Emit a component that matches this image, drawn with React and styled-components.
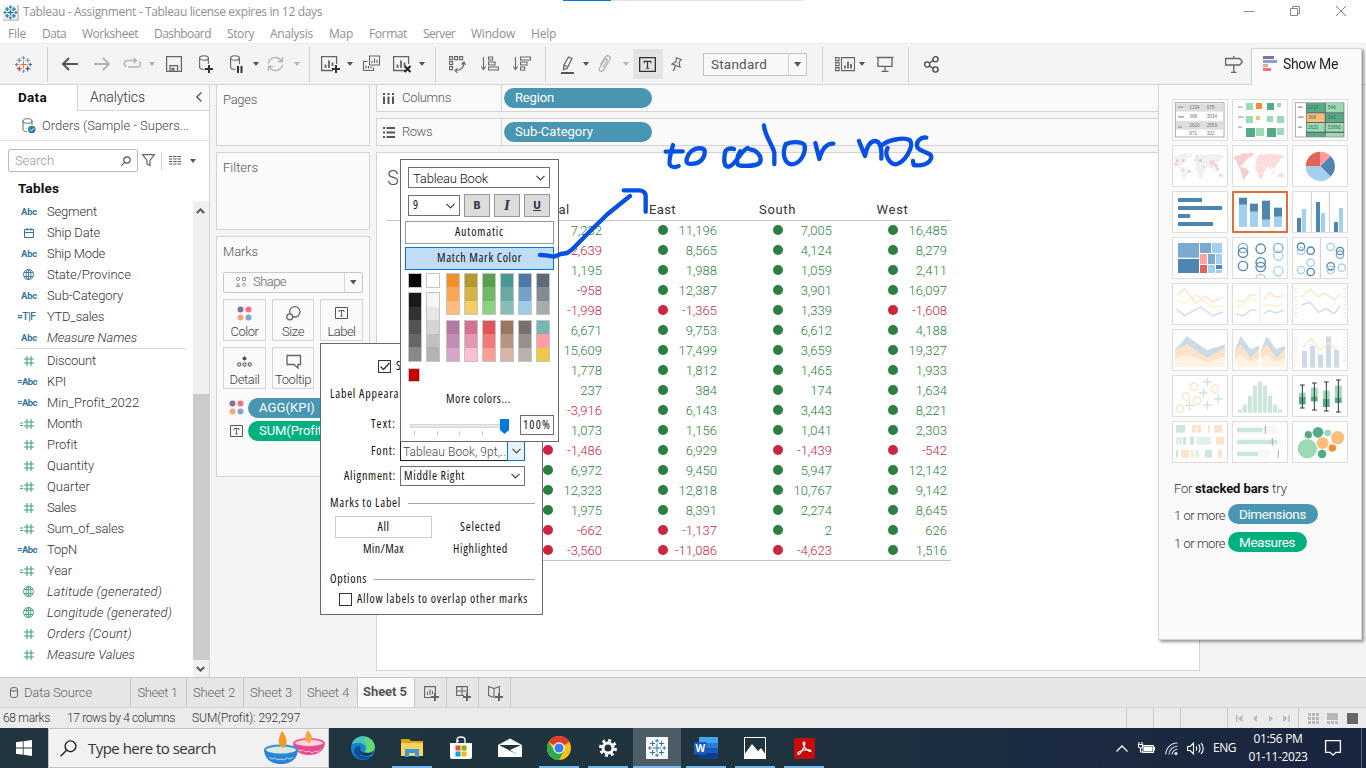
import React, { useLayoutEffect, useRef } from "react";
import styled, { createGlobalStyle, css } from "styled-components";

const BOOK = `Roboto, "Liberation Sans", sans-serif`;
const SYSTEM = `"Open Sans", "Noto Sans", sans-serif`;
const LINE = "#d4d4d4";
const BLUE = "#4996b2";
const GREEN = "#00b180";

const Global = createGlobalStyle`
  *, *::before, *::after { box-sizing: border-box; }
  html, body { margin: 0; padding: 0; overflow: hidden; }
  body { font-family: ${BOOK}; font-size: 13px; color: #333; background: #fff; }
  svg { display: block; flex: none; overflow: visible; }
`;

/* ---------- text ---------- */
const Text = styled.span`
  display: inline-block;
  flex: none;
  white-space: nowrap;
  font-family: ${(p) => (p.$system ? SYSTEM : BOOK)};
  font-size: ${(p) => p.$size || 13}px;
  font-weight: ${(p) => p.$weight || (p.$system ? 400 : 350)};
  font-stretch: ${(p) => (p.$narrow ? "82%" : "100%")};
  font-style: ${(p) => (p.$italic ? "italic" : "normal")};
  color: ${(p) => p.$color || "inherit"};
  line-height: 1.2;
  padding-top: ${(p) => p.$drop || 0}px;
`;

/* Tracks its letters so the string spans exactly `w` pixels. */
function T({ w, children, ...rest }) {
  const ref = useRef(null);
  useLayoutEffect(() => {
    const el = ref.current;
    if (!w || !el) return;
    el.style.letterSpacing = "0px";
    const natural = el.getBoundingClientRect().width;
    el.style.letterSpacing = `${(w - natural) / el.textContent.length}px`;
  }, [w, children]);
  return <Text ref={ref} {...rest}>{children}</Text>;
}
const D = (p) => <T $system $narrow $weight={500} $size={12} {...p} />;

/* ---------- frame ---------- */
const Window = styled.div`
  position: relative;
  width: 1366px;
  height: 768px;
  display: flex;
  flex-direction: column;
  background: #f4f4f4;
  overflow: hidden;
`;
const TitleBar = styled.div`
  height: 24px;
  flex: none;
  display: flex;
  align-items: center;
  background: #fff;
  padding: 0 20px 0 3px;
`;
const TitleText = styled.div`margin-left: 5px; flex: 1; color: #8f8f8f; display: flex;`;
const WindowButtons = styled.div`display: flex; gap: 36px; margin-top: -3px;`;
const LoadingBar = styled.div`
  position: absolute;
  top: 0;
  left: 563px;
  width: 241px;
  height: 1px;
  background: linear-gradient(to right, #0078d7 48px, #e3e3e3 48px);
`;
const MenuBar = styled.div`
  height: 19px;
  flex: none;
  display: flex;
  align-items: center;
  gap: 16px;
  padding: 1px 0 0 8px;
  background: #fff;
  color: #8f8f8f;
`;
const ToolBar = styled.div`
  height: 41px;
  flex: none;
  display: flex;
  align-items: center;
  border-top: 1px solid #eee;
  background: #f4f4f4;
`;
const Tool = styled.div`
  width: ${(p) => p.$w}px;
  margin-left: ${(p) => p.$ml}px;
  flex: none;
  display: flex;
  justify-content: center;
`;
const ToolRule = styled.div`
  width: 1px;
  height: ${(p) => p.$h || 35}px;
  margin-left: ${(p) => p.$ml}px;
  background: #d0d0d0;
  flex: none;
`;
const PressedTool = styled.div`
  width: 30px;
  height: 30px;
  margin-left: 4px;
  background: #e3e3e3;
  display: flex;
  align-items: center;
  justify-content: center;
  padding-right: 1px;
`;
const FitSelect = styled.div`
  width: 104px;
  height: 23px;
  margin-left: 19px;
  display: flex;
  align-items: center;
  padding-left: 7px;
  border: 1px solid #c4c4c4;
  color: #555;
  background: #f8f8f8;
`;
const SelectArrow = styled.div`
  margin-left: auto;
  width: 18px;
  height: 100%;
  display: flex;
  align-items: center;
  justify-content: center;
  border-left: 1px solid #d6d6d6;
`;

const Caret = ({ c = "#555", s = 1 }) => (
  <svg width={6 * s} height={4 * s} viewBox="0 0 6 4"><path d="M0 0h6L3 4z" fill={c} /></svg>
);
const CaretTool = ({ ml, c }) => <Tool $w={6} $ml={ml}><Caret c={c} /></Tool>;

const crosses = [
  [9, 9, 4], [4.5, 4.5, 2.6], [13.5, 4.5, 2.6], [4.5, 13.5, 2.6], [13.5, 13.5, 2.6],
  [9, 1.8, 1.8], [9, 16.2, 1.8], [1.8, 9, 1.8], [16.2, 9, 1.8],
];
const TableauMark = ({ size = 18, colors = ["#2e7ba6"], sw = 1.1 }) => (
  <svg width={size} height={size} viewBox="0 0 18 18" strokeWidth={sw}>
    {crosses.map(([x, y, r], i) => (
      <path key={i} d={`M${x - r} ${y}h${2 * r}M${x} ${y - r}v${2 * r}`} stroke={colors[i % colors.length]} />
    ))}
  </svg>
);

/* ---------- toolbar drawings ---------- */
const S = (p) => <svg width={p.w} height={p.h || 18} viewBox={`0 0 ${p.w} ${p.h || 18}`} fill="none" stroke={p.c || "#666"} strokeWidth={p.sw || 1.3}>{p.children}</svg>;
const Plus = ({ x, y }) => <path d={`M${x - 4} ${y}h8M${x} ${y - 4}v8`} stroke="#333" strokeWidth="2" />;
const Cyl = () => <><ellipse cx="5" cy="3" rx="4.4" ry="2.3" strokeWidth="1.1" /><path d="M.6 3v9c0 1.6 2 2.5 5 2.5M9.4 3v6" strokeWidth="1.1" /></>;
const ArrowIcon = ({ flip, c }) => (
  <S w={16} h={14} c={c} sw={2}><path d={flip ? "M0 7h15M9 1l6 6-6 6" : "M16 7H1M7 1L1 7l6 6"} /></S>
);
const ChartBox = ({ children }) => (
  <S w={19}><path d="M12 15.5H.6V1.6h15V9" /><path d="M4.5 13V9.5M8 13V5.5M11.5 11V7.5" strokeWidth="1.8" />{children}</S>
);

function Toolbar() {
  return (
    <ToolBar>
      <Tool $w={18} $ml={14}><TableauMark size={17} colors={["#e8762c", "#5b8db8", "#7f99b2", "#c72035", "#1f457e", "#7099a6", "#8894b8", "#59879b", "#5c6692"]} /></Tool>
      <ToolRule $ml={15} />
      <Tool $w={16} $ml={14}><ArrowIcon c="#555" /></Tool>
      <Tool $w={16} $ml={16}><ArrowIcon flip c="#b5b5b5" /></Tool>
      <Tool $w={18} $ml={13}><S w={18} h={12} c="#b5b5b5" sw={1.5}><path d="M3 8.500A3.200 3.200 0 0 1 4 2.500h9.500M10.500 0l3 2.500-3 2.700M16.500 3.500c2 2.500 1 5.500-2 5.500H5" /></S></Tool>
      <CaretTool ml={8} c="#b5b5b5" />
      <Tool $w={16} $ml={11}><S w={16} h={16}><path d="M.6.6h14.800v14.800H.6zM4 15V9.600h7.500V15M6 15v-2.500h2V15" /></S></Tool>
      <Tool $w={14} $ml={17}><S w={14}><Cyl /><Plus x={10} y={14} /></S></Tool>
      <Tool $w={13} $ml={17}><S w={13}><Cyl /><path d="M8 11v7M11.5 11v7" stroke="#333" strokeWidth="2" /></S></Tool>
      <CaretTool ml={10} />
      <Tool $w={17} $ml={8}><S w={17} h={16} c="#b5b5b5" sw={1.5}><path d="M1.500 7.500A7 7 0 0 1 14.500 5M15.500 8.500A7 7 0 0 1 2.500 11M15.500 1v4.500H11M1.500 15v-4.500H6" /></S></Tool>
      <CaretTool ml={10} c="#b5b5b5" />
      <ToolRule $ml={9} />
      <Tool $w={19} $ml={11}><ChartBox><Plus x={15} y={14} /></ChartBox></Tool>
      <CaretTool ml={7} />
      <Tool $w={17} $ml={10}>
        <S w={17} sw={1.1}><path d="M6.500 1h10v9h-10zM9 8V6M11.500 8V3.500M14 8V5M4.500 6.500h-4v9h10v-3M3 13.500v-3M5.500 13.500V11M8 13.500v-2" /></S>
      </Tool>
      <Tool $w={19} $ml={13}><ChartBox><path d="M11.500 11l6 6M17.500 11l-6 6" stroke="#222" strokeWidth="2" /></ChartBox></Tool>
      <CaretTool ml={7} />
      <ToolRule $ml={10} />
      <Tool $w={17} $ml={13}><S w={17} sw={1.1}><path d="M.6 1.600h3v3h-3zM5.600 1.600h3v3h-3zM10.600 1.600h3v3h-3zM.6 6.600h3v3h-3zM.6 11.600h3v3h-3zM15 7c0 5-3 8.500-9 8.800M12.500 9.500L15 7l1.500 3M8.500 13L6 15.800l2.500 2" /></S></Tool>
      <Tool $w={18} $ml={15}><S w={18} sw={1.1}><path d="M2.500 2v12M.3 11.500l2.200 3 2.200-3M7.600 2h4v3h-4zM7.600 7h6.400v3H7.600zM7.600 12h9.800v3H7.600z" /></S></Tool>
      <Tool $w={18} $ml={14}><S w={18} sw={1.1}><path d="M2.500 2v12M.3 11.500l2.200 3 2.200-3M7.600 2h9.800v3H7.600zM7.600 7h6.400v3H7.600zM7.600 12h4v3h-4z" /></S></Tool>
      <ToolRule $ml={14} />
      <Tool $w={15} $ml={14}><S w={15} h={19}><path d="M8.500 2l3.500 1.500-5 10-3.500 1 .5-4.500zM4 10l3 1.500" /><path d="M1 18h13" stroke="#555" strokeWidth="2" /></S></Tool>
      <CaretTool ml={8} />
      <Tool $w={14} $ml={9}><S w={14} c="#b5b5b5"><path d="M2.500 9.500l5-7.500c2-2.500 6-.5 4.500 2.500l-6.500 10.500c-2 2.500-5.200.8-4-2L7 4.500c1-1.300 3 0 2.200 1.300L4.800 12.500" /></S></Tool>
      <CaretTool ml={11} c="#b5b5b5" />
      <PressedTool><TextGlyph w={17} h={15} c="#333" /></PressedTool>
      <Tool $w={14} $ml={7}><S w={14} h={16} sw={1.200}><path d="M5.500 1.500l6.500 2.200M6.800 2l-.9 3.500L2 8l8 3-.9-4.500 1.800-3.200M5.500 9.600L3.200 15" /></S></Tool>
      <FitSelect><T w={56} $size={13.500} $weight={400}>Standard</T><SelectArrow><Caret s={1.200} /></SelectArrow></FitSelect>
      <ToolRule $ml={15} />
      <Tool $w={20} $ml={12}><S w={20} h={16} sw={1.1}><path d="M.6 1.600h3.500v3H.6zM.6 6.600h3.500v3H.6zM.6 11.600h3.500v3H.6zM6.500 1.600h13v13h-13z" /><path d="M10 12.500v-3M13 12.500v-7M16 12.500V8" strokeWidth="1.800" /></S></Tool>
      <CaretTool ml={4} />
      <Tool $w={18} $ml={11}><S w={18} h={16}><path d="M.5 1.500h17M2 1.500v8.800h14V1.500M9 10v5M5.500 15.300h7" /></S></Tool>
      <ToolRule $ml={14} />
      <Tool $w={16} $ml={15}><S w={16} h={17} c="#444"><circle cx="3.200" cy="8.500" r="2.600" /><circle cx="11.500" cy="3.200" r="2.600" /><circle cx="11.500" cy="13.500" r="2.600" /><path d="M5.400 7l3.800-2.500M5.400 10l3.800 2.300" /></S></Tool>
      <Tool $w={18} $ml={285}><S w={18}><path d="M.6 3.500h14l2.800 3.200-2.800 3.300h-14zM8.800 1v2.500M8.800 10v7M6 17.300h5.500" /></S></Tool>
    </ToolBar>
  );
}
function TextGlyph({ w = 13, h = 12, c = "#555" }) {
  return (
    <svg width={w} height={h} viewBox="0 0 13 12" preserveAspectRatio="none" fill="none" stroke={c}>
      <path d="M.5.5h12v11H.5z" /><path d="M4 5V3.500h5V5M6.500 3.500v5.500M5.200 9h2.600" strokeWidth=".9" />
    </svg>
  );
}

/* ---------- sidebar ---------- */
const Work = styled.div`flex: none; height: 593px; display: flex; border-top: 1px solid ${LINE};`;
const Sidebar = styled.div`
  width: 210px;
  flex: none;
  display: flex;
  flex-direction: column;
  background: #fff;
  border-right: 1px solid ${LINE};
`;
const SideTabs = styled.div`height: 26px; display: flex; flex: none;`;
const DataTab = styled.div`width: 77px; display: flex; padding: 4px 0 0 18px; color: #111;`;
const AnalyticsTab = styled.div`
  flex: 1;
  display: flex;
  justify-content: space-between;
  padding: 4px 7px 0 12px;
  background: #fafafa;
  border-left: 1px solid ${LINE};
  border-bottom: 1px solid ${LINE};
  svg { margin-top: 3px; }
`;
const SourceRow = styled.div`
  height: 30px;
  flex: none;
  display: flex;
  align-items: center;
  gap: 6px;
  padding-left: 22px;
  border-bottom: 1px solid #e2e2e2;
  color: #444;
`;
const SearchRow = styled.div`height: 39px; flex: none; display: flex; align-items: center; padding-left: 8px;`;
const SearchBox = styled.div`
  width: 130px;
  height: 23px;
  display: flex;
  align-items: center;
  justify-content: space-between;
  padding: 0 6px;
  border: 1px solid #bbb;
  border-radius: 2px;
  color: #999;
`;
const SearchTools = styled.div`display: flex; align-items: center; margin-left: 4px; gap: 7px;`;
const TablesTitle = styled.div`height: 22px; flex: none; padding: 0 0 0 18px; color: #111; display: flex; align-items: center; margin-top: -3px;`;
const FieldsArea = styled.div`flex: 1; display: flex; min-height: 0; margin-top: 2px;`;
const FieldList = styled.div`flex: 1;`;
const FieldRow = styled.div`height: 21px; display: flex; align-items: center; color: #333;`;
const FieldIcon = styled.div`
  width: 38px;
  margin-right: 9px;
  padding-right: ${(p) => p.$pad}px;
  display: flex;
  justify-content: flex-end;
  align-items: center;
  gap: 1px;
`;
const FieldRule = styled.div`height: 1px; margin: 0 7px 1px 15px; background: #d8d8d8;`;
const ScrollTrack = styled.div`
  width: 16px;
  display: flex;
  flex-direction: column;
  justify-content: space-between;
  background: linear-gradient(to bottom, #f0f0f0 193px, #cbcbcb 193px, #cbcbcb 459px, #f0f0f0 459px);
  padding: 7px 3px 5px 3px;
`;

const Globe = ({ c }) => (
  <svg width="11" height="11" viewBox="0 0 11 11" fill="none" stroke={c} strokeWidth=".9"><circle cx="5.500" cy="5.500" r="5" /><ellipse cx="5.500" cy="5.500" rx="2.400" ry="5" /><path d="M1 3.500h9M1 7.500h9M5.500.5v10" /></svg>
);
const Hash = ({ eq }) => (
  <svg width={eq ? 14 : 10} height="10" viewBox={eq ? "-4 0 14 10" : "0 0 10 10"} fill="none" stroke="#3fa37c" strokeWidth="1.100">
    <path d="M0 3h10M0 7h10M3 0v10M7 0v10" />{eq && <path d="M-4 4h3M-4 6.500h3" />}
  </svg>
);
const NAVY = "#33779b";
function Icon({ kind }) {
  if (kind === "abc") return <FieldIcon $pad={1}><T w={16} $drop={1} $size={9.500} $weight={700} $color={NAVY}>Abc</T></FieldIcon>;
  if (kind === "=abc") return <FieldIcon $pad={1}><T w={20} $drop={1} $size={9.500} $weight={700} $color={NAVY}>=Abc</T></FieldIcon>;
  if (kind === "=tf") return <FieldIcon $pad={3}><T w={18} $drop={1} $size={10.500} $weight={500} $color={NAVY}>=T|F</T></FieldIcon>;
  if (kind === "date") return <FieldIcon $pad={4}><svg width="10" height="10" viewBox="0 0 10 10" fill="none" stroke={NAVY}><path d="M.5 1.500h9v8h-9zM.5 4.500h9M3 0v2.500M7 0v2.500" /></svg></FieldIcon>;
  if (kind === "geo") return <FieldIcon $pad={4}><Globe c={NAVY} /></FieldIcon>;
  if (kind === "ggeo") return <FieldIcon $pad={4}><Globe c="#3fa37c" /></FieldIcon>;
  return <FieldIcon $pad={4}><Hash eq={kind === "=#"} /></FieldIcon>;
}
const dims = [
  ["abc", "Segment", 50], ["date", "Ship Date", 53], ["abc", "Ship Mode", 58], ["geo", "State/Province", 84],
  ["abc", "Sub-Category", 76], ["=tf", "YTD_sales", 57], ["abc", "Measure Names", 90, 1],
];
const measures = [
  ["#", "Discount", 49], ["=abc", "KPI", 19], ["=abc", "Min_Profit_2022", 92], ["=#", "Month", 35], ["#", "Profit", 30],
  ["#", "Quantity", 47], ["=#", "Quarter", 43], ["#", "Sales", 29], ["=#", "Sum_of_sales", 77], ["=abc", "TopN", 30],
  ["=#", "Year", 25], ["ggeo", "Latitude (generated)", 115], ["ggeo", "Longitude (generated)", 125],
  ["#", "Orders (Count)", 85], ["#", "Measure Values", 88],
];
const Field = ({ f }) => <FieldRow><Icon kind={f[0]} /><T w={f[2]} $italic={f[3] || /generated|Count|Values/.test(f[1])}>{f[1]}</T></FieldRow>;

function SidePanel() {
  return (
    <Sidebar>
      <SideTabs>
        <DataTab><T w={29} $weight={700} $size={13.500}>Data</T></DataTab>
        <AnalyticsTab>
          <T w={55} $size={14}>Analytics</T>
          <svg width="6" height="10" viewBox="0 0 6 10" fill="none" stroke="#555" strokeWidth="1.300"><path d="M5.500.5L.8 5l4.700 4.500" /></svg>
        </AnalyticsTab>
      </SideTabs>
      <SourceRow>
        <svg width="14" height="16" viewBox="0 0 14 16" fill="none" stroke="#666"><ellipse cx="5.500" cy="3" rx="4.500" ry="2.300" /><path d="M1 3v8.500c0 1.300 2 2 4 2M10 3v4" /><circle cx="9.800" cy="11.500" r="3.800" fill="#2f7ea3" stroke="none" /><path d="M8 11.500l1.400 1.400L12 10.200" stroke="#fff" /></svg>
        <T w={147}>Orders (Sample - Supers...</T>
      </SourceRow>
      <SearchRow>
        <SearchBox><T w={39}>Search</T><svg width="10" height="10" viewBox="0 0 10 10" fill="none" stroke="#555" strokeWidth="1.200"><circle cx="6" cy="4" r="3.200" /><path d="M3.700 6.300L.3 9.700" /></svg></SearchBox>
        <SearchTools>
          <S w={13} h={13} sw={1.200}><path d="M.6.6h11.800L8 6.500v5L5 10V6.500z" /></S>
          <ToolRule $ml={-1} $h={18} />
          <svg width="12" height="10" viewBox="0 0 12 10" stroke="#555" strokeWidth="1.200"><path d="M0 .5h12M0 3h12M0 5.500h12M0 8h12" strokeDasharray="3.300 1" /></svg>
          <Tool $w={7} $ml={1}><Caret /></Tool>
        </SearchTools>
      </SearchRow>
      <TablesTitle><T w={41} $weight={700} $size={13.500}>Tables</T></TablesTitle>
      <FieldsArea>
        <FieldList>
          {dims.map((f) => <Field key={f[1]} f={f} />)}
          <FieldRule />
          {measures.map((f) => <Field key={f[1]} f={f} />)}
        </FieldList>
        <ScrollTrack>
          <S w={9} h={6} c="#555" sw={2}><path d="M.8 5l3.700-3.700L8.200 5" /></S>
          <S w={9} h={6} c="#555" sw={2}><path d="M.8 1l3.700 3.700L8.200 1" /></S>
        </ScrollTrack>
      </FieldsArea>
    </Sidebar>
  );
}

/* ---------- cards ---------- */
const Cards = styled.div`width: 154px; margin-left: 6px; flex: none; display: flex; flex-direction: column; gap: 6px;`;
const Card = styled.div`
  height: ${(p) => p.$h}px;
  margin-top: ${(p) => p.$mt || 0}px;
  border: 1px solid ${LINE};
  background: #fafafa;
  padding: 7px 6px;
  color: #555;
`;
const MarkSelect = styled.div`
  height: 21px;
  width: 140px;
  margin-top: 12px;
  display: flex;
  align-items: center;
  gap: 7px;
  padding-left: 12px;
  border: 1px solid #c8c8c8;
  border-radius: 2px;
  color: #666;
`;
const MarkGrid = styled.div`display: grid; grid-template-columns: 43px 42px 43px; grid-auto-rows: 42px; gap: 6px; margin-top: 6px;`;
const MarkButton = styled.div`
  border: 1px solid ${LINE};
  display: flex;
  flex-direction: column;
  align-items: center;
  justify-content: space-between;
  padding: ${(p) => p.$pt || 6}px 0 0;
  color: #444;
`;
const PillRow = styled.div`display: flex; align-items: center; gap: ${(p) => p.$gap}px; margin-top: ${(p) => p.$mt}px; padding-left: ${(p) => p.$pl}px;`;
const Pill = styled.div`
  width: ${(p) => p.$w}px;
  height: 20px;
  border-radius: 10px;
  background: ${(p) => p.$c};
  color: #fff;
  display: flex;
  align-items: center;
  padding-left: 11px;
`;
const FourDots = ({ s = 15 }) => (
  <svg width={s} height={s} viewBox="0 0 15 15"><circle cx="3.500" cy="3.500" r="3" fill="#876f98" /><circle cx="11.500" cy="3.500" r="3" fill="#fb6e80" /><circle cx="3.500" cy="11.500" r="3" fill="#f4a67c" /><circle cx="11.500" cy="11.500" r="3" fill="#82a3cd" /></svg>
);

function MarkCards() {
  return (
    <Cards>
      <Card $h={62} $mt={-1}><T w={34}>Pages</T></Card>
      <Card $h={78}><T w={35}>Filters</T></Card>
      <Card $h={241}>
        <T w={35}>Marks</T>
        <MarkSelect>
          <svg width="10" height="10" viewBox="0 0 10 10" fill="none" stroke="#888" strokeWidth=".9"><circle cx="2" cy="2" r="1.600" /><path d="M6.500.5h3v3h-3zM.4 9.500h3.400L2 6.300zM8 6l1.700 1.800L8 9.600 6.300 7.800z" /></svg>
          <T w={33}>Shape</T><SelectArrow><Caret s={1.100} /></SelectArrow>
        </MarkSelect>
        <MarkGrid>
          <MarkButton><FourDots /><T w={28}>Color</T></MarkButton>
          <MarkButton><S w={15} h={15}><circle cx="8.800" cy="5.800" r="5.200" /><circle cx="3.800" cy="10.800" r="3" fill="#fafafa" /></S><T w={22}>Size</T></MarkButton>
          <MarkButton $pt={7}><TextGlyph /><T w={28}>Label</T></MarkButton>
          <MarkButton $pt={7}><S w={15} h={14} sw={1.100}><circle cx="7.500" cy="3.500" r="2" fill="#555" stroke="none" /><circle cx="2.200" cy="9.500" r="1.600" /><circle cx="7.500" cy="9.500" r="1.600" /><circle cx="12.800" cy="9.500" r="1.600" /></S><T w={30}>Detail</T></MarkButton>
          <MarkButton><S w={15} h={15}><path d="M1 1.500h13.500v9H12V14L8 10.500H1z" /></S><T w={36}>Tooltip</T></MarkButton>
        </MarkGrid>
        <PillRow $gap={4} $mt={9} $pl={6}><FourDots /><Pill $c={BLUE} $w={106}><T w={56} $weight={400}>AGG(KPI)</T></Pill></PillRow>
        <PillRow $gap={5} $mt={3} $pl={7}><TextGlyph /><Pill $c={GREEN} $w={106}><T w={67} $weight={400}>SUM(Profit)</T></Pill></PillRow>
      </Card>
    </Cards>
  );
}

/* ---------- worksheet ---------- */
const Sheet = styled.div`width: 824px; margin-left: 6px; flex: none; display: flex; flex-direction: column; gap: 6px;`;
const Shelf = styled.div`
  height: 28px;
  margin-top: ${(p) => p.$mt || 0}px;
  display: flex;
  align-items: center;
  border: 1px solid ${LINE};
  background: #fafafa;
  color: #555;
`;
const ShelfName = styled.div`width: 125px; height: 100%; display: flex; align-items: center; gap: ${(p) => p.$gap}px; padding-left: 6px; border-right: 1px solid ${LINE}; margin-right: 2px;`;
const Canvas = styled.div`height: 519px; border: 1px solid ${LINE}; background: #fff; padding: 13px 0 0 9px;`;
const SheetTitle = styled.div`height: 34px; padding-left: 1px; color: #555;`;
const Table = styled.div`width: 565px; border-bottom: 1px solid #c4c4c4;`;
const TableHead = styled.div`
  height: 21px;
  margin-bottom: -1px;
  display: grid;
  grid-template-columns: 104px repeat(4, 115px);
  justify-items: center;
  align-items: center;
  border-bottom: 1px solid #c4c4c4;
  color: #333;
`;
const TableRow = styled.div`height: 20px; display: grid; grid-template-columns: 104px repeat(4, 115px);`;
const NumberCell = styled.div`
  display: flex;
  align-items: center;
  justify-content: space-between;
  padding: 0 3px 0 53px;
  color: ${(p) => (p.$neg ? "#cc2540" : "#2a7f41")};
`;
const Dot = styled.i`width: 10px; height: 10px; border-radius: 50%; background: ${(p) => (p.$neg ? "#cc2540" : "#2a7f41")};`;

const regions = [["Central", 44], ["East", 27], ["South", 37], ["West", 32]];
const profits = [
  "7,232 11,196 7,005 16,485", "-2,639 8,565 4,124 8,279", "1,195 1,988 1,059 2,411", "-958 12,387 3,901 16,097",
  "-1,998 -1,365 1,339 -1,608", "6,671 9,753 6,612 4,188", "15,609 17,499 3,659 19,327", "1,778 1,812 1,465 1,933",
  "237 384 174 1,634", "-3,916 6,143 3,443 8,221", "1,073 1,156 1,041 2,303", "-1,486 6,929 -1,439 -542",
  "6,972 9,450 5,947 12,142", "12,323 12,818 10,767 9,142", "1,975 8,391 2,274 8,645", "-662 -1,137 2 626", "-3,560 -11,086 -4,623 1,516",
].map((r) => r.split(" "));

function Worksheet() {
  return (
    <Sheet>
      <Shelf $mt={-1}>
        <ShelfName $gap={8}><svg width="11" height="11" viewBox="0 0 11 11" stroke="#555" strokeWidth="2"><path d="M1 0v2M1 3.500V11M5.500 0v2M5.500 3.500V11M10 0v2M10 3.500V11" /></svg><T w={49}>Columns</T></ShelfName>
        <Pill $c={BLUE} $w={148}><T w={39} $weight={400}>Region</T></Pill>
      </Shelf>
      <Shelf>
        <ShelfName $gap={7}><svg width="12" height="11" viewBox="0 0 12 11" stroke="#555" strokeWidth="2"><path d="M0 1h2M3.500 1H12M0 5.500h2M3.500 5.500H12M0 10h2M3.500 10H12" /></svg><T w={30}>Rows</T></ShelfName>
        <Pill $c={BLUE} $w={148}><T w={78} $weight={400}>Sub-Category</T></Pill>
      </Shelf>
      <Canvas>
        <SheetTitle><T w={69} $size={20} $weight={300}>Sheet 5</T></SheetTitle>
        <Table>
          <TableHead><T w={76} $weight={400}>Sub-Category</T>{regions.map(([n, w]) => <T key={n} w={w} $weight={400}>{n}</T>)}</TableHead>
          {profits.map((row, i) => (
            <TableRow key={i}>
              <span />
              {row.map((v, j) => <NumberCell key={j} $neg={v[0] === "-"}><Dot $neg={v[0] === "-"} /><Text $drop={2}>{v}</Text></NumberCell>)}
            </TableRow>
          ))}
        </Table>
      </Canvas>
    </Sheet>
  );
}

/* ---------- show me ---------- */
const ShowMe = styled.div`
  position: absolute;
  left: 1158px;
  top: 48px;
  width: 204px;
  display: flex;
  flex-direction: column;
  filter: drop-shadow(2px 2px 1.500px rgba(0, 0, 0, 0.4));
`;
const ShowMeTab = styled.div`
  width: 111px;
  height: 37px;
  margin: 0 0 -1px 93px;
  z-index: 1;
  display: flex;
  gap: 6px;
  padding: 7px 0 0 11px;
  background: #fafafa;
  border: 1px solid ${LINE};
  border-bottom: 0;
  color: #222;
`;
const ShowMeBody = styled.div`height: 556px; background: #fafafa; border: 1px solid ${LINE}; padding: 14px 0 0 13px;`;
const Thumbs = styled.div`display: grid; grid-template-columns: repeat(3, 56px); grid-auto-rows: 42px; gap: 4px;`;
const Thumb = styled.div`
  border: ${(p) => (p.$on ? "2px solid #e0703a" : "1px solid #ddd")};
  background: #fff;
  overflow: hidden;
  svg { margin: ${(p) => (p.$on ? -2 : -1)}px; }
`;
const Advice = styled.div`
  height: 28px;
  padding-left: 2px;
  display: flex;
  align-items: center;
  color: #333;
  gap: 3px;
`;
const AdviceTitle = styled(Advice)`height: 22px; margin-top: 15px; gap: 0;`;

const R = ({ d, f }) => d.map(([x, y, w, h], i) => <rect key={i} x={x} y={y} width={w} height={h} fill={Array.isArray(f) ? f[i % f.length] : f} />);
const C = ({ d, f, s }) => d.map(([x, y, r], i) => <circle key={i} cx={x} cy={y} r={r} fill={s ? "none" : Array.isArray(f) ? f[i % f.length] : f} stroke={s ? (Array.isArray(s) ? s[i % s.length] : s) : "none"} strokeWidth="4" />);
const Num = ({ x, y, children, c = "#777" }) => <text x={x} y={y} fontSize="14" fontFamily="Liberation Sans" fill={c}>{children}</text>;
const dk = "#4f86b0", lt = "#a4d0ef", md = "#7ca9cf";
const gd = "#55ab87", gl = "#9cdab4", or = "#ffbd7b", od = "#f58f2c";
const po = "#fde3c8", pb = "#cddbe9", py = "#fff0c9", pg = "#cbe7da";
const P = ({ d, s }) => <path d={d} fill="none" stroke={s} strokeWidth="4" />;
const WorldMap = ({ a, b }) => (
  <g>
    <path d="M5 38l6-6 14-2 4-4 14-2 6 4 2-4 14 0-4 9-9 6-4-2-4 8-7 6-4 8-7 3 2 7 5 3-3 2-8-5-5-10-3-8-3-7-4 0zM29 67l10 1 13 11-5 10-7 6-3 11-5-3-3-16-5-10z" fill={a} />
    <path d="M73 43l5-10 10-6 5 4 12-5 22 2 26 2 4 4-5 6-6-1-3 10-8 4-2 9-6 4-2 8-6-7-1 8-6-7-4-2-8 6-6-14-10-2-12 1zM70 56l10-3 12 4 6 13 5-1-4 9-4 4-1 10-7 10-6-2-3-15-8-9zM122 76l8 8-4 2-6-6zM138 88l9-5 7 3 2 9-6 3-12-3z" fill={b} />
  </g>
);
const thumbs = [
  <><rect x="10" y="11" width="146" height="103" fill="#fff" stroke="#aaa" strokeWidth="3" /><R f="#dedede" d={[[12, 13, 142, 25], [12, 66, 142, 26]]} /><R f="#aaa" d={[[18, 22, 15, 5], [18, 51, 18, 5], [18, 82, 12, 5]]} />
    {[["1234", "678", 30], ["368", "3034", 58], ["2620", "2559", 85], ["971", "322", 109]].map(([a, b, y]) => <g key={y}><Num x={52} y={y}>{a}</Num><Num x={104} y={y}>{b}</Num></g>)}</>,
  <><R f="#bbb" d={[[18, 22, 14, 5], [18, 52, 17, 5], [18, 82, 12, 5]]} /><R f={[gl, od, gd, gl, gl, or, gl, gl, gd, gl, gd, gl]} d={[[42, 12, 21, 21], [72, 12, 18, 18], [105, 12, 21, 21], [135, 12, 12, 12], [42, 51, 21, 21], [72, 51, 12, 12], [105, 51, 18, 18], [135, 51, 21, 21], [42, 87, 27, 27], [72, 87, 24, 24], [105, 87, 27, 27], [135, 87, 21, 21]]} /></>,
  <><rect x="10" y="11" width="146" height="103" fill="#fff" stroke="#aaa" strokeWidth="3" /><R f="#aaa" d={[[18, 22, 14, 5], [18, 52, 17, 5], [18, 82, 12, 5]]} /><R f="#666" d={[[42, 12, 114, 101]]} /><R f={[gd, gl, or, gd, gl, gl, gd, gl]} d={[[44, 12, 54, 28], [101, 12, 54, 28], [44, 43, 54, 26], [101, 43, 54, 26], [44, 72, 54, 26], [101, 72, 54, 26], [44, 102, 54, 11], [101, 102, 54, 11]]} />
    {[["1234", "546", 30], ["368", "340", 61], ["2620", "53890", 91]].map(([a, b, y]) => <g key={y}><Num x={48} y={y} c="#3b6b58">{a}</Num><Num x={108} y={y} c="#3b6b58">{b}</Num></g>)}</>,
  <><WorldMap a="#f1f1f1" b="#f1f1f1" /><C f={["#edc1c6", "#f8d3d3"]} d={[[15, 47, 4], [12, 58, 6], [34, 47, 4], [33, 75, 4], [52, 79, 4], [72, 45, 4], [85, 47, 5], [75, 35, 4], [96, 65, 3], [121, 53, 8], [132, 62, 4], [136, 71, 6], [146, 90, 3]]} /></>,
  <WorldMap a="#f8cfcf" b="#fcdcdc" />,
  <><path d="M85 64V20A44 44 0 0 1 116 33z" fill="#ff9d96" /><path d="M85 64L116 33A44 44 0 0 1 116 95z" fill={dk} /><path d="M85 64L116 95A44 44 0 0 1 41 64z" fill={lt} /><path d="M85 64H41A44 44 0 0 1 85 20z" fill="#e1645c" /></>,
  <R f={dk} d={[[18, 21, 72, 12], [18, 45, 132, 12], [18, 69, 36, 12], [18, 93, 105, 12]]} />,
  <><R f={lt} d={[[21, 41, 24, 67], [54, 62, 24, 46], [90, 86, 24, 22], [126, 77, 24, 31]]} /><R f={dk} d={[[21, 20, 24, 21], [54, 38, 24, 24], [90, 29, 24, 57], [126, 50, 24, 27]]} /></>,
  <><path d="M58 3v120M112 3v120" stroke="#ccc" strokeWidth="3" /><R f={[dk, lt]} d={[[15, 81, 12, 45], [30, 54, 12, 72], [72, 33, 12, 93], [87, 66, 12, 60], [126, 93, 12, 33], [141, 51, 12, 75]]} /></>,
  <R f={[md, dk, md, lt, "#ffa39d", md, lt, "#e1645c", lt, dk, lt]} d={[[18, 18, 63, 44], [18, 66, 63, 42], [84, 18, 33, 30], [120, 18, 30, 30], [84, 51, 21, 30], [108, 51, 21, 30], [132, 51, 18, 30], [84, 84, 21, 24], [108, 84, 21, 24], [132, 84, 18, 12], [132, 99, 18, 9]]} />,
  <C s={[md, dk, dk, dk, dk, dk, lt, md, lt, lt]} d={[[33, 33, 14], [33, 47, 14], [33, 87, 14], [86, 35, 14], [86, 76, 14], [86, 90, 14], [86, 126, 14], [139, 33, 14], [139, 56, 14], [139, 103, 14]]} />,
  <><path d="M85 3v120" stroke="#ccc" strokeWidth="3" /><C s={[dk, lt, dk, lt, lt, dk, lt, dk, md, dk, lt, lt]} d={[[27, 29, 11], [27, 42, 11], [56, 41, 11], [56, 77, 11], [27, 99, 11], [56, 105, 11], [116, 30, 11], [144, 42, 11], [144, 53, 11], [116, 88, 11], [116, 99, 11], [149, 92, 11]]} /></>,
  <><P s={po} d="M16 37L37 17 72 62 100 39 122 57 153 43" /><P s={py} d="M16 54L37 61 72 35 122 73 153 69" /><P s={pb} d="M13 77L37 98 86 72 122 98 153 87" /></>,
  <><path d="M84 3v120" stroke="#e5e5e5" strokeWidth="3" /><P s={po} d="M12 52L33 57 55 35 74 37M94 52L113 28 130 43 156 38" /><P s={py} d="M12 70L33 70 55 46 74 55M94 68L113 64 130 70 156 62" /><P s={pb} d="M12 92L33 99 55 82 74 81M94 93L113 82 130 90 156 82" /></>,
  <><path d="M12 16v96M158 16v96" stroke="#e0e0e0" strokeWidth="9" strokeDasharray="2 10" /><P s={po} d="M28 43L54 19 80 41 98 31 127 50 144 35" /><P s={pb} d="M28 66L54 58 80 88 100 76 127 92 144 70" /></>,
  <><path d="M9 63L44 22 106 63 159 46V114H9z" fill={pb} /><path d="M9 66L44 46 106 87 159 56V114H9z" fill={po} /><path d="M9 87L44 77 106 98 159 84V114H9z" fill="#fff3e3" /></>,
  <><path d="M9 62L26 22 56 61 81 50V114H9zM87 62L104 22 133 61 159 50V114H87z" fill={pb} /><path d="M9 66L26 46 56 87 81 60V114H9zM87 66L104 46 133 87 159 60V114H87z" fill={po} /><path d="M9 88L26 78 56 98 81 88V114H9zM87 88L104 78 133 98 159 88V114H87z" fill="#fff3e3" /></>,
  <><path d="M12 14v100M158 14v100" stroke="#e0e0e0" strokeWidth="9" strokeDasharray="2 8" /><R f={pb} d={[[30, 65, 15, 51], [54, 50, 15, 66], [78, 77, 15, 39], [102, 23, 15, 93], [126, 62, 15, 54]]} /><P s={po} d="M33 56L58 29 84 64 110 41 136 65" /></>,
  <><C s={po} d={[[66, 35, 11], [129, 41, 11], [42, 65, 11], [75, 77, 11], [24, 101, 11]]} /><P s={pg} d="M93 21h26M106 8v26M81 54h26M94 41v26M125 72h26M138 59v26M39 92h26M52 79v26M93 90h26M106 77v26" /></>,
  <R f={pg} d={[[18, 104, 12, 9], [33, 89, 12, 24], [48, 62, 12, 51], [63, 32, 12, 81], [78, 20, 12, 93], [93, 32, 12, 81], [108, 62, 12, 51], [123, 89, 12, 24], [138, 104, 12, 9]]} />,
  <><R f={gl} d={[[21, 53, 20, 13], [57, 38, 20, 27], [93, 47, 20, 25], [129, 32, 20, 36]]} /><R f={gd} d={[[21, 66, 20, 22], [57, 65, 20, 14], [93, 72, 20, 24], [129, 68, 20, 16]]} /><path d="M31 30v69M24 30h14M24 99h14M67 24v81M60 24h14M60 105h14M103 21v87M96 21h14M96 108h14M139 15v96M132 15h14M132 111h14" stroke="#333" strokeWidth="3" /></>,
  <R f={[pg, po, po, po, po, "#e0f2e8", pg, pg, "#e0f2e8", po, pg, po, po, "#e0f2e8", pg, po]} d={[[12, 12, 27, 23], [60, 12, 12, 23], [75, 12, 12, 23], [108, 12, 6, 23], [126, 12, 24, 23], [12, 48, 18, 23], [33, 48, 9, 23], [54, 48, 12, 23], [75, 48, 42, 23], [132, 48, 24, 23], [12, 87, 6, 23], [27, 87, 24, 23], [57, 87, 6, 23], [69, 87, 12, 23], [99, 87, 21, 23], [138, 87, 12, 23]]} />,
  <><R f="#f7f7f7" d={[[15, 15, 120, 23], [15, 50, 136, 23], [15, 87, 100, 23]]} /><R f={pg} d={[[15, 21, 75, 12], [15, 57, 120, 12], [15, 93, 63, 12]]} /><path d="M100 15v23M121 51v23M139 87v23" stroke="#aaa" strokeWidth="3" /></>,
  <C f={[gl, gd, gd, gl, or, or, od, gd]} d={[[46, 83, 29], [49, 41, 11], [78, 34, 16], [107, 36, 10], [137, 50, 20], [92, 66, 18], [121, 81, 11], [90, 99, 13]]} />,
];

function ShowMePanel() {
  return (
    <ShowMe>
      <ShowMeTab>
        <svg width="14" height="15" viewBox="0 0 14 15"><R f={["#876f98", "#82a3cd", "#f4a67c", "#fb6e80"]} d={[[0, 0, 11, 3], [0, 4, 14, 3], [0, 8, 5, 3], [0, 12, 8, 3]]} /></svg>
        <T w={55} $size={14} $weight={400}>Show Me</T>
      </ShowMeTab>
      <ShowMeBody>
        <Thumbs>{thumbs.map((t, i) => <Thumb key={i} $on={i === 7}><svg width="56" height="42" viewBox="0 0 168 126">{t}</svg></Thumb>)}</Thumbs>
        <AdviceTitle><T w={21}>For&nbsp;</T><T w={77} $weight={700} $color="#111">stacked bars&nbsp;</T><T w={15}>try</T></AdviceTitle>
        <Advice><T w={51} $drop={4}>1 or more</T><Pill $c={BLUE} $w={90}><T w={67} $size={13.500} $weight={400}>Dimensions</T></Pill></Advice>
        <Advice><T w={51} $drop={4}>1 or more</T><Pill $c={GREEN} $w={79}><T w={56} $size={13.500} $weight={400}>Measures</T></Pill></Advice>
      </ShowMeBody>
    </ShowMe>
  );
}

/* ---------- label dialog ---------- */
const LabelDialog = styled.div`
  position: absolute;
  left: 320px;
  top: 343px;
  width: 223px;
  height: 272px;
  border: 1px solid #6a6a6a;
  background: #fff;
  color: #111;
`;
const DialogRow = styled.div`
  height: ${(p) => p.$h}px;
  margin-top: ${(p) => p.$mt || 0}px;
  padding: ${(p) => p.$pt || 0}px 7px 0 ${(p) => p.$pl || 9}px;
  display: flex;
  align-items: center;
  gap: ${(p) => p.$gap || 4}px;
`;
const DialogName = styled.div`width: 75px; margin-left: -9px; padding-left: 9px; display: flex; justify-content: flex-end;`;
const CheckBox = styled.div`width: 13px; height: 13px; border: 1px solid #333; background: #fff; flex: none;`;
const Rule = styled.div`flex: 1; height: 1px; background: #a5a5a5; margin-left: 3px;`;
const Combo = styled.div`
  width: ${(p) => p.$w}px;
  height: ${(p) => p.$h}px;
  flex: none;
  display: flex;
  align-items: center;
  justify-content: space-between;
  padding: 0 4px 0 ${(p) => p.$pl || 3}px;
  border: 1px solid ${(p) => p.$edge || "#707070"};
  background: #fff;
`;
const ComboButton = styled.div`
  width: 18px;
  height: 20px;
  margin-right: -5px;
  display: flex;
  align-items: center;
  justify-content: center;
  border: 1px solid #0078d7;
  background: #e5f1fb;
`;
const ChoiceGrid = styled.div`display: grid; grid-template-columns: 97px 97px; grid-auto-rows: 22px; padding-left: 14px;`;
const Choice = styled.div`
  display: flex;
  align-items: center;
  justify-content: center;
  ${(p) => p.$on && css`border: 1px solid #ccc;`}
`;
const Chevron = () => <S w={9} h={6} c="#444" sw={1.200}><path d="M.5.8l4 4 4-4" /></S>;

function LabelOptions() {
  return (
    <LabelDialog>
      <DialogRow $h={40} $pt={5} $pl={57} $gap={5}><CheckBox><S w={11} h={11} c="#333"><path d="M1.500 5.500l3 3 6-6.500" /></S></CheckBox><D>Show</D></DialogRow>
      <DialogRow $h={20}><D w={86}>Label Appearance</D></DialogRow>
      <DialogRow $h={37} $pt={3}><DialogName><D w={25}>Text:</D></DialogName></DialogRow>
      <DialogRow $h={20}><DialogName><D w={25}>Font:</D></DialogName><Combo $w={125} $h={20} $pl={2} $edge="#222"><T w={103} $drop={2} $size={12} $color="#444">Tableau Book, 9pt,..</T><ComboButton><Chevron /></ComboButton></Combo></DialogRow>
      <DialogRow $h={30}><DialogName><D w={52}>Alignment:</D></DialogName><Combo $w={125} $h={20}><D w={61}>Middle Right</D><Chevron /></Combo></DialogRow>
      <DialogRow $h={25}><D w={71}>Marks to Label</D><Rule /></DialogRow>
      <ChoiceGrid>
        <Choice $on><D w={12}>All</D></Choice>
        <Choice><D w={41}>Selected</D></Choice>
        <Choice><D w={41}>Min/Max</D></Choice>
        <Choice><D w={55}>Highlighted</D></Choice>
      </ChoiceGrid>
      <DialogRow $h={22} $mt={8}><D w={37}>Options</D><Rule /></DialogRow>
      <DialogRow $h={19} $pl={18} $gap={5}><CheckBox /><D w={171}>Allow labels to overlap other marks</D></DialogRow>
    </LabelDialog>
  );
}

/* ---------- font popup ---------- */
const FontPopup = styled.div`
  position: absolute;
  left: 400px;
  top: 159px;
  width: 159px;
  height: 283px;
  padding: 7px 4px 0;
  border: 1px solid #6a6a6a;
  background: #fff;
  color: #111;
`;
const PopupRow = styled.div`display: flex; align-items: center; padding-left: 3px; gap: 4px; margin-top: ${(p) => p.$mt || 0}px;`;
const StyleButton = styled.div`
  width: 26px;
  height: 23px;
  display: flex;
  align-items: center;
  justify-content: center;
  border: 1px solid #999;
  background: #dcdcdc;
  font: 700 11px "DejaVu Sans Condensed", "DejaVu Sans", sans-serif;
  color: #333c4c;
  ${(p) => p.$serif && css`font: italic 700 12px "DejaVu Serif", serif;`}
  ${(p) => p.$under && css`text-decoration: underline;`}
`;
const WideButton = styled.div`
  height: 23px;
  margin-top: ${(p) => p.$mt}px;
  display: flex;
  align-items: center;
  justify-content: center;
  border: 1px solid ${(p) => (p.$on ? "#0078d7" : "#999")};
  background: ${(p) => (p.$on ? "#c0ddf5" : "#fff")};
`;
const Swatches = styled.div`display: flex; padding-left: 3px; margin-top: 3px; gap: 4px;`;
const SwatchPair = styled.div`display: flex; flex-direction: column; gap: ${(p) => p.$gap}px; margin-right: ${(p) => p.$mr || 0}px;`;
const Ramp = styled.div`
  width: ${(p) => p.$w || 14}px;
  height: ${(p) => p.$h}px;
  display: flex;
  flex-direction: column;
  border: 1px solid #c4c4c4;
`;
const Shade = styled.div`flex: 1; background: ${(p) => p.$c};`;
const MoreColors = styled.div`height: 34px; display: flex; align-items: center; justify-content: center; padding-right: 2px;`;
const SliderRow = styled.div`display: flex; align-items: flex-start; padding-left: 5px; justify-content: space-between; margin-top: -1px;`;
const PercentBox = styled.div`width: 34px; height: 20px; display: flex; align-items: center; justify-content: center; border: 1px solid #707070;`;

const ramps = [
  [["#f58f2c", "#faa755", "#febd7e"], ["#b279a2", "#c18db3", "#d4a6c8"]],
  [["#b6992d", "#d3b248", "#f1ce63"], ["#d37295", "#e698b3", "#fabfd2"]],
  [["#59a14f", "#70b964", "#8cd17d"], ["#e15759", "#f27977", "#ff9d9a"]],
  [["#499894", "#67aaa4", "#86bcb6"], ["#9d7660", "#b99380", "#d7b5a6"]],
  [["#4e79a7", "#75a0c8", "#a0cbe8"], ["#79706e", "#988e8b", "#bab0ac"]],
  [["#5f6b76", "#828b91", "#a5acab"], ["#76b7b2", "#ff9da7", "#edc948"]],
];
const RampOf = ({ c, h, w }) => <Ramp $h={h} $w={w}>{c.map((x) => <Shade key={x} $c={x} />)}</Ramp>;

function FontPicker() {
  return (
    <FontPopup>
      <PopupRow><Combo $w={142} $h={21} $pl={4}><T w={75} $drop={2}>Tableau Book</T><Chevron /></Combo></PopupRow>
      <PopupRow $mt={6}>
        <Combo $w={52} $h={21} $pl={4}><D>9</D><Chevron /></Combo>
        <StyleButton>B</StyleButton><StyleButton $serif>I</StyleButton><StyleButton $under>U</StyleButton>
      </PopupRow>
      <WideButton $mt={4}><D w={49}>Automatic</D></WideButton>
      <WideButton $mt={3} $on><D w={85}>Match Mark Color</D></WideButton>
      <Swatches>
        <SwatchPair $gap={4}><RampOf c={["#000"]} h={15} /><RampOf c={["#1a1a1a", "#323232", "#545454", "#666", "#888"]} h={70} /></SwatchPair>
        <SwatchPair $gap={4} $mr={2}><RampOf c={["#fff"]} h={15} /><RampOf c={["#f5f5f5", "#e6e6e6", "#d4d4d4", "#c0c0c0", "#b3b3b3"]} h={70} /></SwatchPair>
        {ramps.map(([a, b]) => <SwatchPair key={a[0]} $gap={5}><RampOf c={a} h={42} /><RampOf c={b} h={42} /></SwatchPair>)}
      </Swatches>
      <PopupRow $mt={6}><RampOf c={["#c80000"]} h={14} w={12} /></PopupRow>
      <MoreColors><D w={65}>More colors...</D></MoreColors>
      <SliderRow>
        <svg width="100" height="22" viewBox="0 0 100 22">
          <rect x=".5" y="9.500" width="94" height="3" fill="#e7eaea" stroke="#d6d6d6" /><path d="M4.500 16v4M27.500 16v4M49.500 16v4M72.500 16v4" stroke="#c4c4c4" /><path d="M90 4h9v11l-4.500 4-4.500-4z" fill="#0078d7" />
        </svg>
        <PercentBox><D w={28}>100%</D></PercentBox>
      </SliderRow>
    </FontPopup>
  );
}

/* ---------- pen annotation ---------- */
const InkLayer = styled.svg`position: absolute; left: 0; top: 0; pointer-events: none;`;
const Ink = () => (
  <InkLayer width="1366" height="768" viewBox="0 0 1366 768">
    <g transform="translate(540 110) scale(.33333)" fill="none" stroke="#0750e6" strokeWidth="13" strokeLinecap="round" strokeLinejoin="round">
      <path d="M0 435L18 436 42 440 62 432 82 429 97 418 150 364 203 312 270 258" />
      <path d="M251 241H298Q316 242 317 258V305" />
      <path d="M399 105C393 130 384 155 390 165C395 173 408 173 416 168M377 125L428 124" />
      <path d="M456 122C444 132 432 156 446 161C478 165 496 145 494 122C490 112 468 113 456 122" />
      <path d="M582 117C570 113 556 118 555 128C551 150 551 172 567 170C590 162 602 122 623 114M601 124C588 142 588 165 600 167C625 168 655 170 661 155C666 138 650 120 630 118" />
      <path d="M672 46C673 75 698 105 703 128L703 162" />
      <path d="M737 103C725 132 734 162 756 163C786 160 799 122 793 104C782 93 750 95 737 103" />
      <path d="M826 99L838 147C843 128 855 100 880 101" />
      <path d="M957 93L975 138C979 118 988 94 1004 93C1020 92 1026 115 1024 146M1025 107C1040 90 1092 80 1110 91C1123 110 1094 158 1067 163C1046 162 1032 130 1043 114" />
      <path d="M1159 83C1143 80 1126 95 1132 112C1140 127 1175 126 1174 142C1170 162 1144 169 1121 165L1119 153" />
    </g>
  </InkLayer>
);

/* ---------- bottom bars ---------- */
const SheetTabs = styled.div`height: 31px; flex: none; display: flex; border-top: 1px solid #c8c8c8; border-bottom: 1px solid ${LINE}; background: #e6e6e6; color: #666;`;
const SheetTab = styled.div`
  width: ${(p) => p.$w}px;
  display: flex;
  align-items: center;
  justify-content: center;
  gap: 6px;
  padding-right: 2px;
  border-right: 1px solid #c8c8c8;
  ${(p) => p.$on && css`background: #fafafa; color: #555; padding-bottom: 2px;`}
  ${(p) => p.$icon && css`padding: 1px 0 0 1px;`}
  ${(p) => p.$start && css`justify-content: flex-start; padding-left: 10px;`}
`;
const StatusBar = styled.div`height: 20px; flex: none; display: flex; align-items: center; background: #ebebeb; color: #333; padding-left: 3px; gap: 17px;`;
const StatusCells = styled.div`margin-left: auto; height: 100%; display: flex;`;
const StatusCell = styled.div`
  width: ${(p) => p.$w}px;
  height: 100%;
  border-left: 1px solid #cbcbcb;
  display: flex;
  align-items: center;
  justify-content: space-evenly;
`;
const Taskbar = styled.div`height: 40px; flex: none; display: flex; background: linear-gradient(to right, #20353e, #20343f 50%, #1c2c40 75%, #19253f);`;
const StartButton = styled.div`width: 48px; display: flex; align-items: center; justify-content: center;`;
const TaskSearch = styled.div`width: 281px; display: flex; align-items: center; background: #f1f1f1; border: 1px solid #c4c4c4; padding-left: 11px; gap: 11px; color: #333;`;
const SearchArt = styled.div`margin: 0 2px 0 auto;`;
const TaskApps = styled.div`display: flex; gap: 1px; margin-left: 10px;`;
const TaskApp = styled.div`
  width: 48px;
  height: 40px;
  display: flex;
  align-items: center;
  justify-content: center;
  background: ${(p) => (p.$active ? "#4d5d66" : "transparent")};
  ${(p) => p.$open && css`box-shadow: inset 0 -2px #76b9ed; clip-path: inset(0 4px);`}
  ${(p) => p.$active && css`box-shadow: inset 0 -2px #76b9ed;`}
`;
const Tray = styled.div`margin-left: auto; display: flex; align-items: center; color: #fff;`;
const TrayItem = styled.div`margin-left: ${(p) => p.$ml}px; flex: none;`;
const Clock = styled.div`width: 62px; margin-left: 11px; display: flex; flex-direction: column; align-items: center; gap: 3px;`;
const DesktopEdge = styled.div`width: 5px; height: 40px; margin-left: 20px; border-left: 1px solid #5d6779;`;

const Diyas = () => (
  <svg width="62" height="36" viewBox="0 0 62 36">
    <ellipse cx="45" cy="13" rx="15" ry="4" fill="#f9d9d9" stroke="#f0629f" strokeWidth="2" />
    <path d="M29 13c1 8 7 12 16 12s15-4 16-12c-6 5-26 5-32 0z" fill="#e8468f" /><path d="M33 19l3 2 3-1 3 2 3-1 3 2 3-2 3 1 3-3" stroke="#f9bfdc" fill="none" />
    <path d="M44 0c5 6 5 10 1 13-5-2-5-7-1-13z" fill="#f9a63c" />
    <ellipse cx="17" cy="20" rx="16" ry="4.500" fill="#dbe8da" stroke="#2f92e4" strokeWidth="2" />
    <path d="M0 20c1 10 8 14 17 14s16-4 17-14c-6 6-28 6-34 0z" fill="#2b83d6" /><path d="M5 27l3 2 3-1 3 2 3-1 3 1 3-2 3 1 3-2" stroke="#b7dcf8" fill="none" />
    <path d="M18 1c6 8 6 13 1 17-6-3-5-10-1-17z" fill="#f59a22" />
  </svg>
);
const apps = [
  [0, <svg width="24" height="24" viewBox="0 0 24 24"><circle cx="12" cy="12" r="12" fill="#1682d4" /><path d="M1 8C4-2 20-3 23.500 9c1 5-3 8-8.500 7.500-2-.5-1.500-2 0-3.500C15 8 8 5 1 8z" fill="#46c8b8" /><path d="M14 1c6 1 10 6 9.800 11-1 4-5 5-9 4 2-3 2-8-1-11z" fill="#6bd768" /><path d="M9 10c-3 6 2 13 12 10-6 6-16 4-18-4 0-5 3-7 6-6z" fill="#0c4f9c" /><path d="M10 11c-2 3 0 6 5 6 3 .5 6-.5 8-2-3 7-13 6-15 0 0-2 .5-3 2-4z" fill="#20343f" /></svg>],
  [1, <svg width="22" height="20" viewBox="0 0 22 20"><path d="M0 1h8l2 2h12v15H0z" fill="#e3a21a" /><path d="M0 5h22v13H0z" fill="#fbd35e" /><path d="M4 19v-8h14v8h-4v-4H8v4z" fill="#3b97dc" /></svg>],
  [0, <svg width="24" height="24" viewBox="0 0 24 24"><path d="M8 7V4c0-4 8-4 8 0v3M9 6V4" fill="none" stroke="#fff" strokeWidth="1.400" /><path d="M1 7h22v14a2 2 0 0 1-2 2H3a2 2 0 0 1-2-2z" fill="#fff" /><R f={["#f25022", "#7fba00", "#00a4ef", "#ffb900"]} d={[[6.500, 9.500, 5, 5], [12.500, 9.500, 5, 5], [6.500, 15.500, 5, 5], [12.500, 15.500, 5, 5]]} /></svg>],
  [0, <svg width="24" height="20" viewBox="0 0 24 20"><path d="M0 7L12 .5 24 7v12H0z" fill="#fff" /><path d="M1 7h22L12 12l8 5L3 8z" fill="#20343f" /></svg>],
  [1, <svg width="24" height="24" viewBox="0 0 24 24"><circle cx="12" cy="12" r="12" fill="#fbc116" /><path d="M12 12L1.600 6A12 12 0 0 1 22.400 6z" fill="#e33b2e" /><path d="M1.600 6A12 12 0 0 0 12 24l5-9-9 0z" fill="#2da94f" /><circle cx="12" cy="12" r="5.800" fill="#fff" /><circle cx="12" cy="12" r="4.600" fill="#3b7ded" /></svg>],
  [1, <svg width="18" height="18" viewBox="0 0 18 18"><circle cx="9" cy="9" r="5" fill="none" stroke="#fff" strokeWidth="3" /><circle cx="9" cy="9" r="7.500" fill="none" stroke="#fff" strokeWidth="3" strokeDasharray="2.900 2.990" /></svg>],
  [2, <svg width="22" height="22" viewBox="-2 -2 22 22"><rect x="-2" y="-2" width="22" height="22" fill="#f6f8f9" /><TableauMark sw={1} /></svg>],
  [1, <svg width="24" height="22" viewBox="0 0 24 22"><R f={["#41a5ee", "#2b7cd3", "#185abd", "#103f91"]} d={[[5, 0, 19, 6], [5, 6, 19, 5], [5, 11, 19, 5], [5, 16, 19, 6]]} /><rect y="5" width="12.500" height="12.500" fill="#185abd" /><text x="1.500" y="15" fontSize="10" fontWeight="700" fontFamily="Open Sans" fill="#fff">W</text></svg>],
  [1, <svg width="22" height="22" viewBox="0 0 22 22"><path d="M.5.5h21v21H.5z" fill="none" stroke="#fff" /><path d="M0 18l8-11 6 7 3-3 5 7v4H0z" fill="#fff" /></svg>],
  [1, <svg width="21" height="21" viewBox="0 0 21 21"><rect width="21" height="21" rx="1" fill="#c80a0a" /><path d="M10 4c2 0 0 5-1 7-2 4-4 6-5 5s1-3 6-4c4-1 7 0 7 1s-3 0-5-2c-2-2-4-7-2-7z" fill="none" stroke="#fff" strokeWidth="1.200" /></svg>],
];

const TinyPlus = ({ x, y }) => <path d={`M${x - 4} ${y}h8M${x} ${y - 4}v8`} stroke="#666" strokeWidth="2" />;
const menus = [["File", 18], ["Data", 24], ["Worksheet", 56], ["Dashboard", 57], ["Story", 27], ["Analysis", 43], ["Map", 24], ["Format", 38], ["Server", 32], ["Window", 44], ["Help", 25]];

export default function App() {
  return (
    <Window>
      <Global />
      <TitleBar>
        <svg width="15" height="15" viewBox="-1 -1 20 20"><path d="M-1 19H19V-1" stroke="#999" fill="none" strokeWidth="1.500" /><rect x="-1" y="-1" width="19" height="19" fill="#eef3f5" /><TableauMark sw={1.800} /></svg>
        <TitleText><T w={299} $system $size={12}>Tableau - Assignment - Tableau license expires in 12 days</T></TitleText>
        <WindowButtons>
          <S w={10} h={10} c="#888" sw={1}><path d="M0 5.500h10" /></S>
          <S w={10} h={10} c="#888" sw={1}><path d="M.5 2.500h7v7h-7zM2.500 2.500v-2h7v7h-2" /></S>
          <S w={10} h={10} c="#888" sw={1}><path d="M0 0l10 10M10 0L0 10" /></S>
        </WindowButtons>
      </TitleBar>
      <LoadingBar />
      <MenuBar>{menus.map(([m, w]) => <T key={m} w={w} $system $size={12}>{m}</T>)}</MenuBar>
      <Toolbar />
      <Work><SidePanel /><MarkCards /><Worksheet /></Work>
      <SheetTabs>
        <SheetTab $w={131} $start><svg width="8" height="11" viewBox="0 0 8 11" fill="none" stroke="#666"><ellipse cx="4" cy="2.300" rx="3.500" ry="1.800" /><path d="M.5 2.500v6.500c0 2 7 2 7 0V2.500" /></svg><T w={68}>Data Source</T></SheetTab>
        {[56, 57, 57, 57].map((w, i) => <SheetTab key={i} $w={w}><T w={i ? 42 : 40}>{`Sheet ${i + 1}`}</T></SheetTab>)}
        <SheetTab $w={57} $on><T w={44} $weight={700}>Sheet 5</T></SheetTab>
        <SheetTab $w={32} $icon><S w={15} h={15} sw={1.100}><path d="M8 11.500H.6V.6h10.800V7M3.500 9V6M6 9V3.500M8.500 8V5" /><TinyPlus x={11} y={11} /></S></SheetTab>
        <SheetTab $w={32} $icon><S w={15} h={15} sw={1.100}><path d="M8 9.500H.6V.6h10.800V7M.6 5h10.800M6 .6v9" /><TinyPlus x={11} y={11} /></S></SheetTab>
        <SheetTab $w={32} $icon><S w={15} h={15} sw={1.100}><path d="M6 2.500L.6.6v9L6 11.500M6 2.500L11.400.6V7M6 2.500v9" /><TinyPlus x={11} y={11} /></S></SheetTab>
      </SheetTabs>
      <StatusBar>
        <T w={47} $size={12}>68 marks</T><T w={108} $size={12}>17 rows by 4 columns</T><T w={108} $size={12}>SUM(Profit): 292,297</T>
        <StatusCells>
          <StatusCell $w={27} /><StatusCell $w={27} /><StatusCell $w={47} />
          <StatusCell $w={71}>
            <svg width="56" height="7" viewBox="0 0 56 7" fill="#bbb"><path d="M1 0h1.500v7H1zM7.500 0v7L3 3.500zM22 0v7l-4-3.500zM34 0v7l4-3.500zM48 0v7l4.500-3.500zM53.500 0H55v7h-1.500z" /></svg>
          </StatusCell>
          <StatusCell $w={68}>
            <svg width="11" height="11" viewBox="0 0 11 11"><path d="M0 1.500h11M0 5.500h11M0 9.500h11" stroke="#b8b8b8" strokeWidth="3" strokeDasharray="3 1" /></svg>
            <svg width="11" height="11" viewBox="0 0 11 11"><path d="M0 0h11v7H0zM0 8h3v3H0zM4 8h3v3H4zM8 8h3v3H8z" fill="#b8b8b8" /></svg>
            <svg width="11" height="11" viewBox="0 0 11 11"><path d="M0 0h11v11H0z" fill="#666" /></svg>
          </StatusCell>
        </StatusCells>
      </StatusBar>
      <Taskbar>
        <StartButton><svg width="16" height="16" viewBox="0 0 16 16" fill="#fff"><path d="M0 2.300l6.800-1v6.200H0zM7.600 1.200L16 0v7.500H7.600zM0 8.500h6.800v6.200l-6.800-1zM7.600 8.500H16V16l-8.400-1.200z" /></svg></StartButton>
        <TaskSearch>
          <svg width="17" height="17" viewBox="0 0 17 17" fill="none" stroke="#222" strokeWidth="1.400"><circle cx="10.500" cy="6.300" r="5.400" /><path d="M6.600 10.200L.5 16.300" /></svg>
          <T w={128} $system $size={15}>Type here to search</T>
          <SearchArt><Diyas /></SearchArt>
        </TaskSearch>
        <TaskApps>{apps.map(([s, el], i) => <TaskApp key={i} $open={s === 1} $active={s === 2}>{el}</TaskApp>)}</TaskApps>
        <Tray>
          <TrayItem $ml={0}><S w={12} h={7} c="#fff"><path d="M.5 6.500L6 1l5.500 5.500" /></S></TrayItem>
          <TrayItem $ml={10}><S w={17} h={12} c="#fff" sw={1.100}><path d="M5 3.500h10.500v7H5z" /><path d="M6.500 5h7.500v4H6.500z" fill="#fff" /><path d="M15.500 5.500h1v3M1 0v2M4 0v2M.5 2.500h4v2c0 2-4 2-4 0zM2.500 6v4H5" /></S></TrayItem>
          <TrayItem $ml={10}><S w={13} h={13} c="#ddd" sw={1.100}><path d="M.8 12.500A11.500 11.500 0 0 1 12.500 1M4 12.500A8.500 8.500 0 0 1 12.500 4.200M7 12.500a5.500 5.500 0 0 1 5.500-5.200" /><circle cx="11" cy="11.500" r="1.500" fill="#fff" stroke="none" /></S></TrayItem>
          <TrayItem $ml={9}><S w={17} h={13} c="#fff" sw={1.100}><path d="M.6 4.500h2.500L6.500 1v11L3.100 8.500H.6zM9 4.500c1 1 1 3 0 4M11.500 2.500c2 2 2 6 0 8M14 1c3 3 3 8 0 11" /></S></TrayItem>
          <TrayItem $ml={9}><T w={23} $system $size={12}>ENG</T></TrayItem>
          <Clock><T w={49} $system $size={12}>01:56 PM</T><T w={59} $system $size={12}>01-11-2023</T></Clock>
          <TrayItem $ml={16}><S w={16} h={16} c="#fff"><path d="M.6.6h14.800v11.800h-4.600L8 15.200l-2.800-2.800H.6z" /></S></TrayItem>
          <DesktopEdge />
        </Tray>
      </Taskbar>
      <LabelOptions />
      <FontPicker />
      <ShowMePanel />
      <Ink />
    </Window>
  );
}
